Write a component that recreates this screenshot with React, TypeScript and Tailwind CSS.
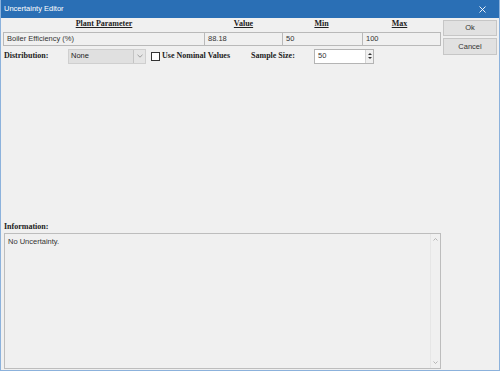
import React from 'react';

const serif = "font-['Liberation_Serif','Times_New_Roman',serif]";
const sans = "font-['Liberation_Sans',Arial,sans-serif]";

const Cell: React.FC<{ text: string }> = ({ text }) => (
  <div className="h-full border border-[#b9b9b9] bg-[#f0f0f0] pl-[3px] flex items-center -ml-px first:ml-0">
    <span className={`${sans} text-[7.5px] text-[#333]`}>{text}</span>
  </div>
);

const Header: React.FC<{ text: string }> = ({ text }) => (
  <div className={`${serif} text-[8px] font-bold underline text-[#222] text-center`}>{text}</div>
);

export default function App() {
  return (
    <div className="w-[500px] h-[371px] bg-[#f0f0f0] flex flex-col border-x border-b border-[#8cb2dc] overflow-hidden">
      {/* title bar */}
      <div className="h-[18px] bg-[#2a6fb5] flex items-center justify-between pl-[3px] pr-[13px] shrink-0">
        <span className={`${sans} text-[7.5px] text-white`}>Uncertainty Editor</span>
        <svg width="7" height="7" viewBox="0 0 7 7" className="text-white">
          <path d="M0.5 0.5 L6.5 6.5 M6.5 0.5 L0.5 6.5" stroke="currentColor" strokeWidth="0.9" />
        </svg>
      </div>

      <div className="flex-1 flex">
        {/* main column */}
        <div className="w-[440px] pl-[2px] flex flex-col">
          <div className="grid grid-cols-[202px_77px_79px_77px] h-[14px] items-end pb-[2px]">
            <Header text="Plant Parameter" />
            <Header text="Value" />
            <Header text="Min" />
            <Header text="Max" />
          </div>
          <div className="grid grid-cols-[202px_78px_80px_78px] h-[14px]">
            <Cell text="Boiler Efficiency (%)" />
            <Cell text="88.18" />
            <Cell text="50" />
            <Cell text="100" />
          </div>

          <div className="flex items-center h-[16px] mt-[2px]">
            <span className={`${serif} text-[8px] font-bold text-[#222] w-[65px] pl-px`}>Distribution:</span>
            <div className="w-[78px] h-[15px] border border-[#cfcfcf] bg-[#e5e5e5] flex items-center">
              <div className={`${sans} text-[7.5px] text-[#222] flex-1 h-full border-r border-[#c4c4c4] bg-[#e0e0e0] pl-[2px] flex items-center`}>
                None
              </div>
              <div className="w-[11px] h-full flex items-center justify-center">
                <svg width="6" height="4" viewBox="0 0 6 4">
                  <path d="M0.5 0.8 L3 3.2 L5.5 0.8" fill="none" stroke="#8a8a8a" strokeWidth="0.8" />
                </svg>
              </div>
            </div>
            <div className="ml-[5px] w-[9px] h-[9px] border border-[#333] bg-white" />
            <span className={`${serif} text-[8px] font-bold text-[#222] ml-[2px]`}>Use Nominal Values</span>
            <span className={`${serif} text-[8px] font-bold text-[#222] ml-[21px] w-[63px]`}>Sample Size:</span>
            <div className="w-[60px] h-[15px] border border-[#b4b4b4] bg-white flex">
              <div className={`${sans} text-[7.5px] text-[#333] flex-1 pl-[3px] flex items-center`}>50</div>
              <div className="w-[8px] h-full flex flex-col items-center justify-center gap-[2px] bg-[#f0f0f0] border-l border-[#d4d4d4]">
                <svg width="4" height="2" viewBox="0 0 4 2"><path d="M0 2 L2 0 L4 2 Z" fill="#333" /></svg>
                <svg width="4" height="2" viewBox="0 0 4 2"><path d="M0 0 L2 2 L4 0 Z" fill="#333" /></svg>
              </div>
            </div>
          </div>

          <div className="flex-1" />

          <div className={`${serif} text-[8px] leading-[10px] font-bold text-[#222] h-[11px] pl-px`}>Information:</div>
          <div className="h-[136px] mb-[1px] border border-[#bdbdbd] bg-[#f0f0f0] flex ml-px">
            <div className={`${sans} text-[7.5px] leading-[10px] text-[#333] flex-1 pl-[3px] pt-[3px]`}>
              No Uncertainty.
            </div>
            <div className="w-[10px] border-l border-[#e6e6e6] flex flex-col justify-between items-center py-[4px]">
              <svg width="5" height="3" viewBox="0 0 5 3"><path d="M0.5 2.5 L2.5 0.5 L4.5 2.5" fill="none" stroke="#a6a6a6" strokeWidth="0.8" /></svg>
              <svg width="5" height="3" viewBox="0 0 5 3"><path d="M0.5 0.5 L2.5 2.5 L4.5 0.5" fill="none" stroke="#a6a6a6" strokeWidth="0.8" /></svg>
            </div>
          </div>
        </div>

        {/* buttons */}
        <div className="flex flex-col gap-[2px] pl-[2px] pt-[2px]">
          <button className={`${sans} w-[54px] h-[16px] bg-[#e1e1e1] border border-[#c6c6c6] text-[7.5px] text-[#333]`}>Ok</button>
          <button className={`${sans} w-[54px] h-[17px] bg-[#e1e1e1] border border-[#c6c6c6] text-[7.5px] text-[#333]`}>Cancel</button>
        </div>
      </div>
    </div>
  );
}
